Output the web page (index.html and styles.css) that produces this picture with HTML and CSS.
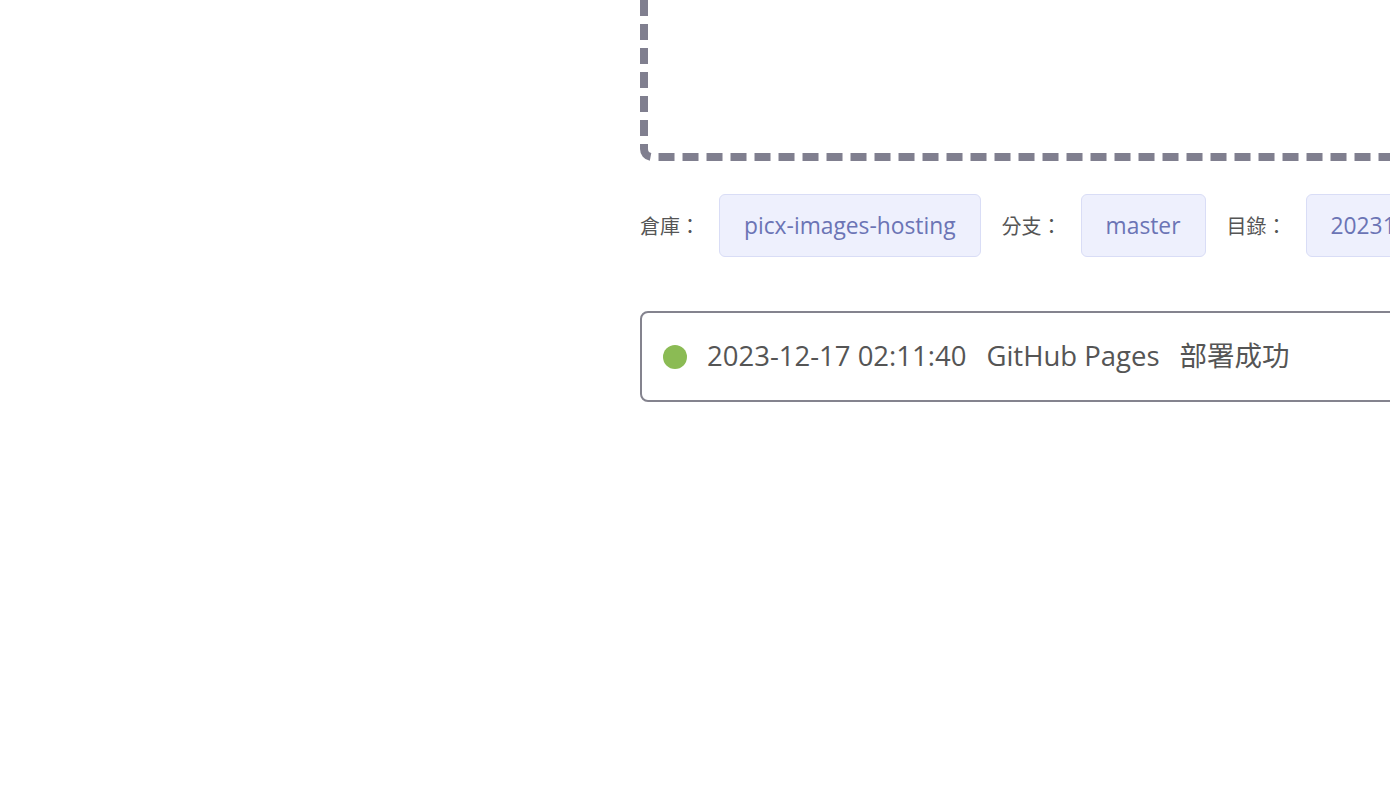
FILE: index.html
```html
<!DOCTYPE html>
<html lang="zh-Hant">
<head>
<meta charset="utf-8">
<title>PicX</title>
<link rel="stylesheet" href="styles.css">
</head>
<body>
<main class="main">
  <svg class="drop-zone" width="800" height="162" viewBox="0 0 800 162" aria-hidden="true">
    <path d="M4 -4 V149 A8 8 0 0 0 12 157 H800" fill="none" stroke="#807f8f" stroke-width="8" stroke-dasharray="16 8" stroke-dashoffset="20"/>
  </svg>
  <div class="info-row">
    <span class="label">倉庫：</span>
    <span class="tag">picx-images-hosting</span>
    <span class="label">分支：</span>
    <span class="tag">master</span>
    <span class="label">目錄：</span>
    <span class="tag">20231217</span>
  </div>
  <div class="status-card">
    <span class="dot"></span>
    <span class="status-text">2023-12-17 02:11:40</span>
    <span class="status-text">GitHub Pages</span>
    <span class="status-text">部署成功</span>
  </div>
</main>
</body>
</html>
```

FILE: styles.css
```css
html, body {
  margin: 0;
  padding: 0;
  background: #ffffff;
  overflow: hidden;
}
body {
  width: 1390px;
  height: 790px;
  font-family: "Open Sans", "Noto Sans CJK TC", sans-serif;
  color: #555555;
}
.main {
  padding-left: 640px;
  display: flex;
  flex-direction: column;
  align-items: flex-start;
}
.drop-zone {
  display: block;
  flex-shrink: 0;
}
.info-row {
  margin-top: 32px;
  display: flex;
  align-items: center;
  white-space: nowrap;
}
.label {
  font-size: 20px;
  color: #555555;
  margin-right: 19px;
}
.tag {
  box-sizing: border-box;
  height: 63px;
  display: flex;
  align-items: center;
  padding: 0 24px;
  background: #eef0fd;
  border: 1px solid #d9ddf6;
  border-radius: 6px;
  color: #6b74b5;
  font-size: 22.8px;
  margin-right: 21px;
}
.status-card {
  margin-top: 54px;
  box-sizing: border-box;
  width: 1000px;
  height: 91px;
  border: 2px solid #84838e;
  border-radius: 8px;
  display: flex;
  align-items: center;
  padding-left: 21px;
  gap: 20px;
  white-space: nowrap;
}
.dot {
  width: 24px;
  height: 24px;
  border-radius: 50%;
  background: #8bbb54;
}
.status-text {
  font-size: 27.5px;
  line-height: 1.2;
  color: #555555;
  padding-bottom: 3px;
}
```
